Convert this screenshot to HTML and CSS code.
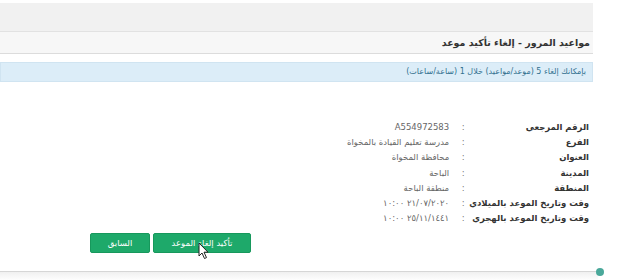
FILE: index.html
```html
<!DOCTYPE html>
<html lang="ar" dir="rtl">
<head>
  <meta charset="UTF-8">
  <title>مواعيد المرور - إلغاء تأكيد موعد</title>
  <link rel="stylesheet" href="styles.css">
</head>
<body>
  <div class="page">
    <div class="topbar"></div>

    <div class="panel-heading">مواعيد المرور - إلغاء تأكيد موعد</div>

    <div class="alert">بإمكانك إلغاء 5 (موعد/مواعيد) خلال 1 (ساعة/ساعات)</div>

    <div class="details">
      <div class="label">الرقم المرجعي</div><div class="colon">:</div><div class="value">A554972583</div>
      <div class="label">الفرع</div><div class="colon">:</div><div class="value">مدرسة تعليم القيادة بالمخواة</div>
      <div class="label">العنوان</div><div class="colon">:</div><div class="value">محافظة المخواة</div>
      <div class="label">المدينة</div><div class="colon">:</div><div class="value">الباحة</div>
      <div class="label">المنطقة</div><div class="colon">:</div><div class="value">منطقة الباحة</div>
      <div class="label">وقت وتاريخ الموعد بالميلادي</div><div class="colon">:</div><div class="value">٢١/٠٧/٢٠٢٠ ١٠:٠٠</div>
      <div class="label">وقت وتاريخ الموعد بالهجري</div><div class="colon">:</div><div class="value">٢٥/١١/١٤٤١ ١٠:٠٠</div>
    </div>

    <div class="actions">
      <button class="btn btn-confirm">تأكيد إلغاء الموعد
        <svg class="cursor" width="12" height="18" viewBox="0 0 12 18">
          <path d="M1 1 L1 14 L4 11 L6.5 16.5 L8.5 15.6 L6 10.2 L10 10.2 Z" fill="#fff" stroke="#222" stroke-width="1"/>
        </svg>
      </button>
      <button class="btn">السابق</button>
    </div>
  </div>

  <div class="footer-line"><span class="dot"></span></div>
</body>
</html>
```

FILE: styles.css
```css
body {
  margin: 0;
  font-family: "DejaVu Sans", "Noto Sans", sans-serif;
  background: #fff;
  color: #333;
  width: 622px;
  height: 280px;
  overflow: hidden;
  position: relative;
}

.page {
  width: 593px;
  margin-right: 29px;
  padding-top: 3px;
}

.topbar {
  height: 28px;
  background: #f1f1f1;
  border-bottom: 1px solid #e2e2e2;
}

.panel-heading {
  height: 21px;
  line-height: 21px;
  padding-right: 3px;
  background: #f7f7f7;
  border-bottom: 1px solid #dcdcdc;
  font-size: 9.5px;
  font-weight: bold;
  color: #333;
}

.alert {
  margin-top: 8px;
  height: 18px;
  line-height: 18px;
  padding-right: 6px;
  background: #dcedf8;
  border: 1px solid #d0e4f1;
  font-size: 8px;
  color: #31708f;
}

.details {
  margin-top: 38px;
  padding-right: 4px;
  display: grid;
  grid-template-columns: max-content 12px 1fr;
  font-size: 8.5px;
  line-height: 15.2px;
  white-space: nowrap;
}

.label {
  font-weight: bold;
  color: #333;
}

.colon {
  text-align: center;
  color: #777;
}

.value {
  padding-right: 8px;
  color: #666;
}

.actions {
  margin-top: 7px;
  padding-right: 342px;
  display: flex;
  gap: 3px;
}

.btn {
  position: relative;
  height: 20px;
  padding: 0 12px;
  min-width: 60px;
  border: 1px solid #17985c;
  border-radius: 2px;
  background: #1ea96a;
  color: #fff;
  font-family: inherit;
  font-size: 8.5px;
}

.btn-confirm {
  width: 98px;
}

.cursor {
  position: absolute;
  left: 44px;
  top: 8px;
}

.footer-line {
  position: absolute;
  left: 0;
  top: 271px;
  width: 598px;
  height: 9px;
  border-top: 1px solid #d6d6d6;
  background: linear-gradient(#f0f0f0, #fff);
}

.dot {
  position: absolute;
  right: -6px;
  top: -4px;
  width: 8px;
  height: 8px;
  border-radius: 50%;
  background: #4aa89a;
}
```
